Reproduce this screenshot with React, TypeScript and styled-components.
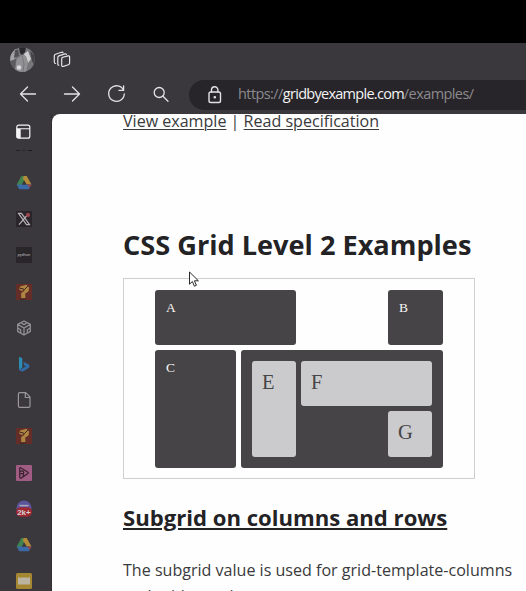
import React from "react";
import styled, { createGlobalStyle } from "styled-components";

const Global = createGlobalStyle`
  * { box-sizing: border-box; }
  body { margin: 0; background: #3b383d; overflow: hidden; }
`;

const Screen = styled.div`
  width: 526px;
  height: 591px;
  overflow: hidden;
  display: grid;
  grid-template: 43px 33px 38px 1fr / 52px 1fr;
  background: #3b383d;
`;
const TopBand = styled.div`
  grid-column: 1 / -1;
  background: #000;
`;
const TitleBar = styled.header`
  grid-column: 1 / -1;
  display: flex;
  align-items: center;
  gap: 18px;
  padding-left: 10px;
`;
const NavBar = styled.nav`
  grid-column: 1 / -1;
  display: flex;
  align-items: center;
  padding-left: 17px;
  padding-bottom: 2px;
`;
const NavButton = styled.button<{ $width: number }>`
  width: ${(p) => p.$width}px;
  height: 22px;
  padding: 0;
  border: 0;
  background: none;
  display: flex;
  align-items: center;
`;
const AddressBar = styled.div`
  flex: 1;
  height: 30px;
  display: flex;
  align-items: center;
  gap: 12px;
  padding-left: 15px;
  border-radius: 15px 0 0 15px;
  background: #272529;
  margin-top: 1px;
`;
const Url = styled.span`
  font: 14.5px/22px "Open Sans", sans-serif;
  letter-spacing: -0.58px;
  color: #8c8a8e;
  white-space: nowrap;
  margin-top: -1px;
`;
const Host = styled.span`
  color: #f4f4f4;
  letter-spacing: -0.72px;
`;
const Sidebar = styled.aside`
  display: flex;
  flex-direction: column;
  align-items: center;
  padding: 9px 4px 0 0;
  border-right: 1px solid #302e33;
`;
const DockItem = styled.div`
  flex: none;
  height: 36.2px;
  width: 20px;
  display: flex;
  align-items: center;
  justify-content: center;
`;
const TabToggle = styled.div`
  flex: none;
  height: 42px;
  width: 20px;
  display: flex;
  flex-direction: column;
  align-items: center;
`;
const Page = styled.main`
  overflow: hidden;
  background: #fefefe;
  border-top-left-radius: 8px;
  padding-left: 71px;
  color: #3a3a3c;
  font-family: "Open Sans", sans-serif;
`;
const Links = styled.p`
  margin: -5px 0 0;
  font-size: 16.07px;
  line-height: 24px;
  white-space: nowrap;
`;
const Link = styled.a`
  color: inherit;
  text-decoration: underline;
  text-decoration-thickness: 1px;
  text-underline-offset: 2px;
`;
const Title = styled.h2`
  margin: 93px 0 0;
  height: 52px;
  color: #232225;
  font-size: 27.15px;
  line-height: 38px;
  font-weight: 700;
  white-space: nowrap;
`;
const Figure = styled.div`
  width: 352px;
  height: 201px;
  border: 1px solid #cfcfd0;
  padding: 11px 0 0 31px;
`;
const Demo = styled.div`
  display: grid;
  width: 288px;
  grid-template: 55px 118px / 81px 55px 82px 55px;
  gap: 5px;
  font-family: "Liberation Serif", serif;
`;
const DarkBox = styled.div<{ $column: string; $row: number }>`
  grid-column: ${(p) => p.$column};
  grid-row: ${(p) => p.$row};
  border-radius: 3px;
  background: #464446;
  color: #f6f6f6;
  padding: 10px 11px;
  font-size: 13.5px;
  line-height: 15px;
`;
const Subgrid = styled(DarkBox)`
  display: grid;
  padding: 11px;
  grid-template: 45px 46px / 44px 82px 44px;
  gap: 5px;
`;
const LightBox = styled.div<{ $column: string; $row: string }>`
  grid-column: ${(p) => p.$column};
  grid-row: ${(p) => p.$row};
  border-radius: 3px;
  background: #cbcbcd;
  color: #464446;
  padding: 10px;
  font-size: 20.5px;
  line-height: 23px;
`;
const Subtitle = styled.h3`
  margin: 23px 0 0;
  color: #232225;
  font-size: 22.12px;
  line-height: 31px;
  white-space: nowrap;
  text-decoration: underline;
  text-decoration-thickness: 1.5px;
  text-underline-offset: 2px;
`;
const Paragraph = styled.p`
  margin: 25px 0 0;
  font-size: 16.07px;
  line-height: 25.6px;
  white-space: nowrap;
`;
const Pointer = styled.svg`
  position: absolute;
  left: 188px;
  top: 271px;
`;

const line = { fill: "none", stroke: "#e4e2e5", strokeWidth: 1.3, strokeLinecap: "round", strokeLinejoin: "round" } as const;

const Avatar = () => (
  <svg width="25" height="25" viewBox="0 0 25 25">
    <clipPath id="face"><circle cx="12.5" cy="12.5" r="12.3" /></clipPath>
    <g clipPath="url(#face)">
      <rect width="25" height="25" fill="#77777a" />
      <path d="M0 5L6 1l1 8-4 5H0z" fill="#a3a2a5" />
      <path d="M5 3h3l1 6-5 2z" fill="#504f53" />
      <path d="M9 0h7l-1 5-3 3-2-2z" fill="#29282b" />
      <path d="M14 7l4-3 3 8-3 4z" fill="#cfced0" />
      <path d="M20 4l5 5v10l-3-5z" fill="#454347" />
      <path d="M7 12l5-4 4 1 2 6-2 10H4z" fill="#929194" />
      <path d="M12 9l2 8-1 8" stroke="#77767a" fill="none" />
      <path d="M0 14l6-2-1 13z" fill="#5c5b5f" />
      <circle cx="9" cy="20.5" r="2.3" fill="#d9d8da" />
    </g>
  </svg>
);
const Workspaces = () => (
  <svg width="18" height="18" viewBox="0 0 18 18" {...line} strokeWidth="1.2">
    <path d="M9 6.5l6-1.6q1.6-.3 1.6 1.2v6q0 1.3-1.2 1.7l-5 1.6q-1.7.5-1.7-1.2V7.9q0-1 .9-1.4z" />
    <path d="M5.8 14.2q-1 0-1-1.3V6.5q0-1.2 1.1-1.6l6-2q1-.3 1.5.5M2.6 12.5q-1.3 0-1.3-1.4V5q0-1.3 1.2-1.7l6-2q1.2-.3 1.5.5" />
  </svg>
);
const Arrow = ({ flip = false }: { flip?: boolean }) => (
  <svg width="22" height="20" viewBox="0 0 22 20" {...line}>
    <path transform={flip ? "matrix(-1 0 0 1 22 0)" : undefined} d="M18.5 10H3.5M10.5 3L3.5 10l7 7" />
  </svg>
);
const Reload = () => (
  <svg width="22" height="22" viewBox="0 0 22 22" {...line}>
    <path d="M17.6 7.3A7.8 7.8 0 1 0 18.3 11M17.6 2.8v4.6h-4.6" />
  </svg>
);
const Search = () => (
  <svg width="18" height="18" viewBox="0 0 18 18" {...line}>
    <circle cx="7.2" cy="7.5" r="5" /><path d="M11 11.3l5 5" />
  </svg>
);
const Lock = () => (
  <svg width="22" height="20" viewBox="0 0 22 20" {...line} strokeWidth="1.4">
    <rect x="5" y="7" width="11.5" height="10.5" rx="1.8" />
    <path d="M7.5 7V5a3.2 3.2 0 0 1 6.4 0v2" /><circle cx="10.8" cy="12.3" r=".6" fill="#e4e2e5" />
  </svg>
);
const Tabs = () => (
  <svg width="16" height="28" viewBox="0 0 16 28">
    <rect x=".8" y="2.2" width="13" height="13" rx="2" fill="none" stroke="#f4f3f5" strokeWidth="1.2" />
    <path d="M.5 5.2h13.5v1H4.7V15.3H2q-1.5 0-1.5-1z" fill="#f4f3f5" />
    <path d="M0 28h4M6.5 28H9M12 27.8h4" stroke="#1c1a1e" strokeWidth="1.5" />
  </svg>
);
const Drive = () => (
  <svg width="16" height="16" viewBox="0 0 16 16">
    <path d="M5.4 1h2.8L9.6 3.4 3.7 14.2.7 9.5z" fill="#408350" />
    <path d="M8 1h2.7l4.8 8.4h-4.7L6.7 3.2z" fill="#b48b39" />
    <path d="M3.3 9.5h12.2l-2.7 4.7H3.5L.8 9.7z" fill="#3b6aa9" />
    <path d="M11 9.5h4.6l-2 3.3z" fill="#994342" />
    <path d="M8 5.6l2.2 3.9H5.8z" fill="#3b383d" />
  </svg>
);
const XMark = () => (
  <svg width="16" height="16" viewBox="0 0 16 16">
    <rect width="16" height="16" fill="#29252a" />
    <path d="M2.5 2.3h3l8 11.4h-3zM12.7 2.5L3 13.7" fill="none" stroke="#b5b2b6" strokeWidth="1.2" />
    <circle cx="12" cy="4" r="2.1" fill="#a04450" />
  </svg>
);
const BadgeText = styled.text`
  font: bold 7.6px "Liberation Sans", sans-serif;
  fill: #d8cfd2;
`;
const PlateText = styled.text`
  font: italic bold 4.2px "Liberation Sans", sans-serif;
  fill: #98959a;
`;
const NamePlate = () => (
  <svg width="16" height="16" viewBox="0 0 16 16">
    <rect width="16" height="16" fill="#292529" />
    <PlateText x="1.4" y="9.4" textLength="13">python</PlateText>
  </svg>
);
const Riddle = () => (
  <svg width="16" height="16" viewBox="0 0 16 16">
    <rect width="16" height="16" fill="#652d27" />
    <path d="M4 2.6L10.5.8l2.6 2.8-.5 4-3.4 2 .2 4.6H5.2V9l3.2-2-.2-1.4L5.6 7 3 5.2z" fill="#af8641" />
    <path d="M3.5 4l5 1.4L12 2M4.5 15h5.5" stroke="#372727" fill="none" />
  </svg>
);
const Cube = () => (
  <svg width="16" height="16" viewBox="0 0 16 16" fill="none" stroke="#939095" strokeWidth="1.3" strokeLinejoin="round">
    <path d="M8 1l6.3 3.4v7L8 15l-6.3-3.6v-7zM1.7 4.4L8 8l6.3-3.6M8 8v7M5 2.8l3 1.8 3-1.8M1.7 8l3 1.7v3.2M14.3 8l-3 1.7v3.2" />
  </svg>
);
const Bing = () => (
  <svg width="16" height="16" viewBox="0 0 16 16">
    <path d="M3 .8L6.3 2.2v9.2L3 14z" fill="#2c8cb3" />
    <path d="M7.2 5.7l4.5 2.1q2.4 1.2 1.5 3.8L7.8 15q-2.5 1.2-4.6-1L10 10.6l-1.6-.8z" fill="#326ca7" />
  </svg>
);
const Doc = () => (
  <svg width="16" height="16" viewBox="0 0 16 16" fill="none" stroke="#98959b" strokeWidth="1.2" strokeLinejoin="round">
    <path d="M3.7.7h6L14 5v9q0 1.4-1.3 1.4h-9q-1.3 0-1.3-1.4V2Q2.4.7 3.7.7zM9.3 1v4.5h4.4" />
  </svg>
);
const PinkMark = () => (
  <svg width="16" height="16" viewBox="0 0 16 16">
    <rect width="16" height="16" rx="1" fill="#a05c82" />
    <path d="M3.7 3.4q0-1.1 1-.6l7.2 4.4q.8.6 0 1.3l-6.8 4.6q-1.2.5-1.3-.8zM3.9 6.2h3.3q1.2 1.2 0 2.5H4M7.6 8.7l-.3 2.6" fill="none" stroke="#39222f" strokeWidth="1.2" />
  </svg>
);
const Counter = () => (
  <svg width="18" height="18" viewBox="0 0 18 18">
    <circle cx="9" cy="8" r="7.5" fill="#5c559c" />
    <path d="M4.5 5.6h9" stroke="#aaa7be" strokeWidth="1.5" />
    <rect x="1" y="7.2" width="16" height="9.5" rx="4.7" fill="#9c2832" />
    <BadgeText x="2.2" y="14.6" textLength="13.5" lengthAdjust="spacingAndGlyphs">2k+</BadgeText>
  </svg>
);
const Slides = () => (
  <svg width="16" height="16" viewBox="0 0 16 16">
    <rect width="16" height="16" rx="1.5" fill="#a68731" />
    <rect x="2" y="4.5" width="12" height="7" fill="#b9b3a0" />
  </svg>
);

const dock = [Drive, XMark, NamePlate, Riddle, Cube, Bing, Doc, Riddle, PinkMark, Counter, Drive, Slides];

export default function App() {
  return (
    <>
      <Global />
      <Screen>
        <TopBand />
        <TitleBar><Avatar /><Workspaces /></TitleBar>
        <NavBar>
          <NavButton $width={44} aria-label="Back"><Arrow /></NavButton>
          <NavButton $width={45} aria-label="Forward"><Arrow flip /></NavButton>
          <NavButton $width={46} aria-label="Reload"><Reload /></NavButton>
          <NavButton $width={37} aria-label="Search"><Search /></NavButton>
          <AddressBar>
            <Lock />
            <Url>https://<Host>gridbyexample.com</Host>/examples/</Url>
          </AddressBar>
        </NavBar>
        <Sidebar>
          <TabToggle><Tabs /></TabToggle>
          {dock.map((Icon, i) => <DockItem key={i}><Icon /></DockItem>)}
        </Sidebar>
        <Page>
          <Links><Link>View example</Link> | <Link>Read specification</Link></Links>
          <Title>CSS Grid Level 2 Examples</Title>
          <Figure>
            <Demo>
              <DarkBox $column="1 / 3" $row={1}>A</DarkBox>
              <DarkBox $column="4" $row={1}>B</DarkBox>
              <DarkBox $column="1" $row={2}>C</DarkBox>
              <Subgrid $column="2 / 5" $row={2}>
                <LightBox $column="1" $row="1 / 3">E</LightBox>
                <LightBox $column="2 / 4" $row="1">F</LightBox>
                <LightBox $column="3" $row="2">G</LightBox>
              </Subgrid>
            </Demo>
          </Figure>
          <Subtitle>Subgrid on columns and rows</Subtitle>
          <Paragraph>The subgrid value is used for grid-template-columns<br />and grid-template-rows.</Paragraph>
        </Page>
      </Screen>
      <Pointer width="12" height="17" viewBox="0 0 12 17">
        <path d="M1.5 1v12.2l2.9-2.7 2 4.7 2-.9-2-4.5h4z" fill="#fff" stroke="#29282b" />
      </Pointer>
    </>
  );
}
